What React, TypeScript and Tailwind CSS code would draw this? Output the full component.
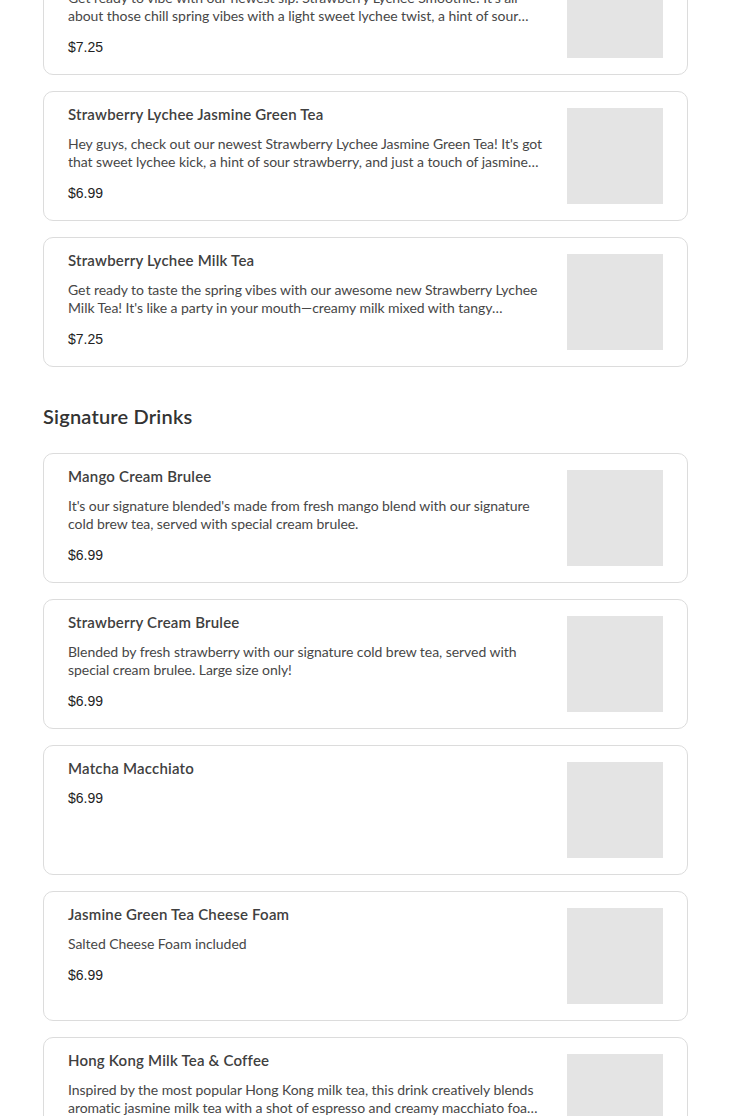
import React from "react";

type Item = { name: string; desc?: string; price: string };

const top: Item[] = [
  {
    name: "Strawberry Lychee Smoothie",
    desc: "Get ready to vibe with our newest sip: Strawberry Lychee Smoothie! It's all about those chill spring vibes with a light sweet lychee twist, a hint of sour strawberry and more.",
    price: "$7.25",
  },
  {
    name: "Strawberry Lychee Jasmine Green Tea",
    desc: "Hey guys, check out our newest Strawberry Lychee Jasmine Green Tea! It's got that sweet lychee kick, a hint of sour strawberry, and just a touch of jasmine tea to make it perfect.",
    price: "$6.99",
  },
  {
    name: "Strawberry Lychee Milk Tea",
    desc: "Get ready to taste the spring vibes with our awesome new Strawberry Lychee Milk Tea! It's like a party in your mouth—creamy milk mixed with tangy strawberry and sweet lychee.",
    price: "$7.25",
  },
];

const sig: Item[] = [
  {
    name: "Mango Cream Brulee",
    desc: "It's our signature blended's made from fresh mango blend with our signature cold brew tea, served with special cream brulee.",
    price: "$6.99",
  },
  {
    name: "Strawberry Cream Brulee",
    desc: "Blended by fresh strawberry with our signature cold brew tea, served with special cream brulee. Large size only!",
    price: "$6.99",
  },
  { name: "Matcha Macchiato", price: "$6.99" },
  { name: "Jasmine Green Tea Cheese Foam", desc: "Salted Cheese Foam included", price: "$6.99" },
  {
    name: "Hong Kong Milk Tea & Coffee",
    desc: "Inspired by the most popular Hong Kong milk tea, this drink creatively blends aromatic jasmine milk tea with a shot of espresso and creamy macchiato foam on top.",
    price: "$6.99",
  },
];

function Card({ item }: { item: Item }) {
  return (
    <div className="flex gap-[19px] rounded-[10px] border border-[#dcdcdc] bg-white px-6 py-4">
      <div className="flex min-w-0 flex-1 flex-col gap-[13px]">
        <div className="-mt-px mb-px text-[15px] font-semibold leading-[14px] tracking-[0.2px] text-[#404040] [font-family:Lato,sans-serif]">
          {item.name}
        </div>
        {item.desc && (
          <div className="line-clamp-2 text-[14px] leading-[18px] tracking-[-0.05px] text-[#474747] [font-family:Lato,sans-serif]">
            {item.desc}
          </div>
        )}
        <div className="text-[14px] leading-[18px] text-[#222] [font-family:'Liberation_Sans',Arial,sans-serif]">
          {item.price}
        </div>
      </div>
      <div className="h-[96px] w-[96px] shrink-0 bg-[#e4e4e4]" />
    </div>
  );
}

export default function App() {
  return (
    <div className="h-[1116px] overflow-hidden bg-white">
      <div className="mt-[-55px] pl-[43px] pr-[42px]">
        <div className="flex flex-col gap-4">
          {top.map((it) => (
            <Card key={it.name} item={it} />
          ))}
        </div>
        <h2 className="mb-[22px] mt-[36px] h-[28px] text-[20px] font-semibold leading-[26px] tracking-[0.2px] text-[#333] [font-family:Lato,sans-serif]">
          Signature Drinks
        </h2>
        <div className="flex flex-col gap-4">
          {sig.map((it) => (
            <Card key={it.name} item={it} />
          ))}
        </div>
      </div>
    </div>
  );
}
